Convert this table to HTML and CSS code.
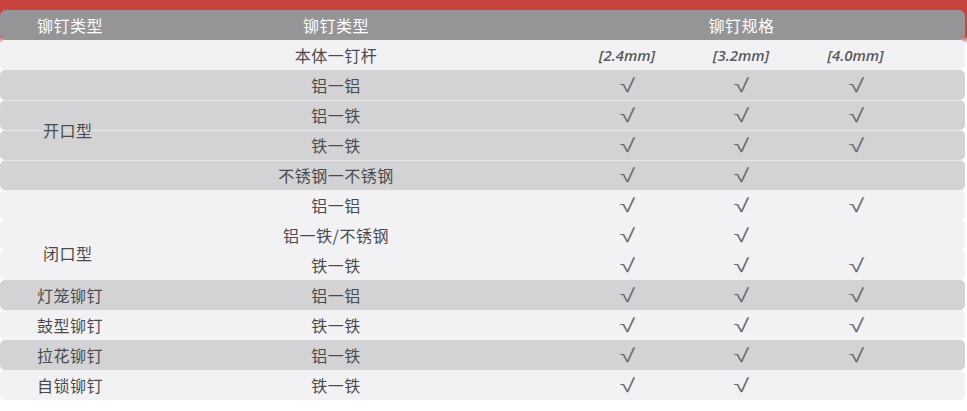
FILE: index.html
```html
<!DOCTYPE html>
<html lang="zh">
<head>
<meta charset="utf-8">
<title>铆钉规格表</title>
<link rel="stylesheet" href="styles.css">
</head>
<body>
<div class="page">
  <div class="sheet">
    <div class="row head">
      <div class="c-type">铆钉类型</div>
      <div class="c-name">铆钉类型</div>
      <div class="c-spec">铆钉规格</div>
    </div>
    <div class="row light">
      <div class="c-name">本体一钉杆</div>
      <div class="k1 size">[2.4mm]</div>
      <div class="k2 size">[3.2mm]</div>
      <div class="k3 size">[4.0mm]</div>
    </div>

    <div class="group">
      <div class="group-rows">
        <div class="row gray">
          <div class="c-name">铝一铝</div>
          <div class="k1 ck"><span>√</span></div><div class="k2 ck"><span>√</span></div><div class="k3 ck"><span>√</span></div>
        </div>
        <div class="row gray">
          <div class="c-name">铝一铁</div>
          <div class="k1 ck"><span>√</span></div><div class="k2 ck"><span>√</span></div><div class="k3 ck"><span>√</span></div>
        </div>
        <div class="row gray">
          <div class="c-name">铁一铁</div>
          <div class="k1 ck"><span>√</span></div><div class="k2 ck"><span>√</span></div><div class="k3 ck"><span>√</span></div>
        </div>
        <div class="row gray">
          <div class="c-name">不锈钢一不锈钢</div>
          <div class="k1 ck"><span>√</span></div><div class="k2 ck"><span>√</span></div>
        </div>
      </div>
      <div class="group-label">开口型</div>
    </div>

    <div class="group">
      <div class="group-rows">
        <div class="row light">
          <div class="c-name">铝一铝</div>
          <div class="k1 ck"><span>√</span></div><div class="k2 ck"><span>√</span></div><div class="k3 ck"><span>√</span></div>
        </div>
        <div class="row light">
          <div class="c-name">铝一铁/不锈钢</div>
          <div class="k1 ck"><span>√</span></div><div class="k2 ck"><span>√</span></div>
        </div>
        <div class="row light">
          <div class="c-name">铁一铁</div>
          <div class="k1 ck"><span>√</span></div><div class="k2 ck"><span>√</span></div><div class="k3 ck"><span>√</span></div>
        </div>
      </div>
      <div class="group-label low">闭口型</div>
    </div>

    <div class="row gray">
      <div class="c-type">灯笼铆钉</div>
      <div class="c-name">铝一铝</div>
      <div class="k1 ck"><span>√</span></div><div class="k2 ck"><span>√</span></div><div class="k3 ck"><span>√</span></div>
    </div>
    <div class="row light">
      <div class="c-type">鼓型铆钉</div>
      <div class="c-name">铁一铁</div>
      <div class="k1 ck"><span>√</span></div><div class="k2 ck"><span>√</span></div><div class="k3 ck"><span>√</span></div>
    </div>
    <div class="row gray">
      <div class="c-type">拉花铆钉</div>
      <div class="c-name">铝一铁</div>
      <div class="k1 ck"><span>√</span></div><div class="k2 ck"><span>√</span></div><div class="k3 ck"><span>√</span></div>
    </div>
    <div class="row light">
      <div class="c-type">自锁铆钉</div>
      <div class="c-name">铁一铁</div>
      <div class="k1 ck"><span>√</span></div><div class="k2 ck"><span>√</span></div>
    </div>
  </div>
</div>
</body>
</html>
```

FILE: styles.css
```css
html, body {
  margin: 0;
  padding: 0;
  background: #ffffff;
}

body {
  font-family: "Noto Sans CJK SC", "Noto Sans", sans-serif;
  font-size: 16px;
  color: #4a4a4c;
}

.page {
  width: 967px;
  height: 411px;
  background: linear-gradient(to bottom, #c8433d 0, #c9463f 36px, #ffffff 44px);
  padding-top: 10px;
  box-sizing: border-box;
}

.sheet {
  width: 965px;
  display: flex;
  flex-direction: column;
}

.row {
  display: grid;
  grid-template-columns: 200px 272px 98px 114px 114px 115px 1fr;
  height: 30px;
  align-items: center;
  border-radius: 5px;
  letter-spacing: 0.5px;
  line-height: 30px;
}

.head {
  background: #959597;
  color: #ffffff;
  border-radius: 6px;
}

.light { background: #f2f2f4; }
.gray { background: #d3d3d5; }

.group-rows .gray + .gray {
  box-shadow: inset 0 1px 0 rgba(255, 255, 255, 0.45);
}

.c-type { grid-column: 1; padding-left: 37px; }
.c-name { grid-column: 2; text-align: center; }
.c-spec { grid-column: 4 / 7; text-align: center; }

.k1 { grid-column: 4; text-align: center; }
.k2 { grid-column: 5; text-align: center; }
.k3 { grid-column: 6; text-align: center; }

.size {
  font-family: "Open Sans", "Liberation Sans", sans-serif;
  font-style: italic;
  font-weight: 600;
  font-size: 15px;
  letter-spacing: 0;
  color: #5a5a5c;
}

.ck {
  font-family: "Noto Sans", sans-serif;
  font-size: 19px;
  color: #6c6c6e;
  letter-spacing: 0;
}

.ck span {
  display: inline-block;
  transform: scaleX(1.5);
  margin-left: 1px;
}

.group { display: grid; }
.group > * { grid-area: 1 / 1; }

.group-rows {
  display: flex;
  flex-direction: column;
}

.group-label {
  align-self: center;
  justify-self: start;
  padding-left: 43px;
  letter-spacing: 0.5px;
}

.group-label.low { padding-top: 36px; }
```
